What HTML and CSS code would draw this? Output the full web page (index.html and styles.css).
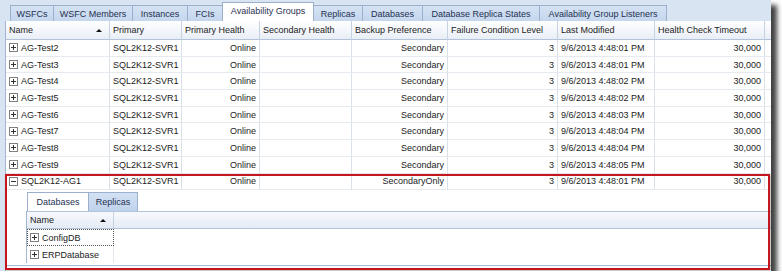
FILE: index.html
```html
<!DOCTYPE html>
<html>
<head>
  <title>Availability Groups</title>
  <link rel="stylesheet" href="styles.css">
</head>
<body>
<div class="window">
  <div class="tabs">
    <span class="tab">WSFCs</span>
    <span class="tab">WSFC Members</span>
    <span class="tab">Instances</span>
    <span class="tab">FCIs</span>
    <span class="tab on">Availability Groups</span>
    <span class="tab">Replicas</span>
    <span class="tab">Databases</span>
    <span class="tab">Database Replica States</span>
    <span class="tab">Availability Group Listeners</span>
  </div>

  <div class="grid">
    <div class="row head">
      <div class="cell">Name <span class="sort"></span></div>
      <div class="cell">Primary</div>
      <div class="cell">Primary Health</div>
      <div class="cell">Secondary Health</div>
      <div class="cell">Backup Preference</div>
      <div class="cell">Failure Condition Level</div>
      <div class="cell">Last Modified</div>
      <div class="cell">Health Check Timeout</div>
      <div class="cell"></div>
    </div>

    <div class="row">
      <div class="cell"><svg class="exp" width="9" height="9" viewBox="0 0 9 9"><rect x="0.5" y="0.5" width="8" height="8" fill="#fff" stroke="#808080"/><path d="M2 4.5h5M4.5 2v5" stroke="#333"/></svg>AG-Test2</div>
      <div class="cell">SQL2K12-SVR1</div>
      <div class="cell num">Online</div>
      <div class="cell"></div>
      <div class="cell num">Secondary</div>
      <div class="cell num">3</div>
      <div class="cell">9/6/2013 4:48:01 PM</div>
      <div class="cell num">30,000</div>
      <div class="cell"></div>
    </div>
    <div class="row">
      <div class="cell"><svg class="exp" width="9" height="9" viewBox="0 0 9 9"><rect x="0.5" y="0.5" width="8" height="8" fill="#fff" stroke="#808080"/><path d="M2 4.5h5M4.5 2v5" stroke="#333"/></svg>AG-Test3</div>
      <div class="cell">SQL2K12-SVR1</div>
      <div class="cell num">Online</div>
      <div class="cell"></div>
      <div class="cell num">Secondary</div>
      <div class="cell num">3</div>
      <div class="cell">9/6/2013 4:48:01 PM</div>
      <div class="cell num">30,000</div>
      <div class="cell"></div>
    </div>
    <div class="row">
      <div class="cell"><svg class="exp" width="9" height="9" viewBox="0 0 9 9"><rect x="0.5" y="0.5" width="8" height="8" fill="#fff" stroke="#808080"/><path d="M2 4.5h5M4.5 2v5" stroke="#333"/></svg>AG-Test4</div>
      <div class="cell">SQL2K12-SVR1</div>
      <div class="cell num">Online</div>
      <div class="cell"></div>
      <div class="cell num">Secondary</div>
      <div class="cell num">3</div>
      <div class="cell">9/6/2013 4:48:02 PM</div>
      <div class="cell num">30,000</div>
      <div class="cell"></div>
    </div>
    <div class="row">
      <div class="cell"><svg class="exp" width="9" height="9" viewBox="0 0 9 9"><rect x="0.5" y="0.5" width="8" height="8" fill="#fff" stroke="#808080"/><path d="M2 4.5h5M4.5 2v5" stroke="#333"/></svg>AG-Test5</div>
      <div class="cell">SQL2K12-SVR1</div>
      <div class="cell num">Online</div>
      <div class="cell"></div>
      <div class="cell num">Secondary</div>
      <div class="cell num">3</div>
      <div class="cell">9/6/2013 4:48:02 PM</div>
      <div class="cell num">30,000</div>
      <div class="cell"></div>
    </div>
    <div class="row">
      <div class="cell"><svg class="exp" width="9" height="9" viewBox="0 0 9 9"><rect x="0.5" y="0.5" width="8" height="8" fill="#fff" stroke="#808080"/><path d="M2 4.5h5M4.5 2v5" stroke="#333"/></svg>AG-Test6</div>
      <div class="cell">SQL2K12-SVR1</div>
      <div class="cell num">Online</div>
      <div class="cell"></div>
      <div class="cell num">Secondary</div>
      <div class="cell num">3</div>
      <div class="cell">9/6/2013 4:48:03 PM</div>
      <div class="cell num">30,000</div>
      <div class="cell"></div>
    </div>
    <div class="row">
      <div class="cell"><svg class="exp" width="9" height="9" viewBox="0 0 9 9"><rect x="0.5" y="0.5" width="8" height="8" fill="#fff" stroke="#808080"/><path d="M2 4.5h5M4.5 2v5" stroke="#333"/></svg>AG-Test7</div>
      <div class="cell">SQL2K12-SVR1</div>
      <div class="cell num">Online</div>
      <div class="cell"></div>
      <div class="cell num">Secondary</div>
      <div class="cell num">3</div>
      <div class="cell">9/6/2013 4:48:04 PM</div>
      <div class="cell num">30,000</div>
      <div class="cell"></div>
    </div>
    <div class="row">
      <div class="cell"><svg class="exp" width="9" height="9" viewBox="0 0 9 9"><rect x="0.5" y="0.5" width="8" height="8" fill="#fff" stroke="#808080"/><path d="M2 4.5h5M4.5 2v5" stroke="#333"/></svg>AG-Test8</div>
      <div class="cell">SQL2K12-SVR1</div>
      <div class="cell num">Online</div>
      <div class="cell"></div>
      <div class="cell num">Secondary</div>
      <div class="cell num">3</div>
      <div class="cell">9/6/2013 4:48:04 PM</div>
      <div class="cell num">30,000</div>
      <div class="cell"></div>
    </div>
    <div class="row">
      <div class="cell"><svg class="exp" width="9" height="9" viewBox="0 0 9 9"><rect x="0.5" y="0.5" width="8" height="8" fill="#fff" stroke="#808080"/><path d="M2 4.5h5M4.5 2v5" stroke="#333"/></svg>AG-Test9</div>
      <div class="cell">SQL2K12-SVR1</div>
      <div class="cell num">Online</div>
      <div class="cell"></div>
      <div class="cell num">Secondary</div>
      <div class="cell num">3</div>
      <div class="cell">9/6/2013 4:48:05 PM</div>
      <div class="cell num">30,000</div>
      <div class="cell"></div>
    </div>

    <div class="expanded">
      <div class="row">
        <div class="cell"><svg class="exp" width="9" height="9" viewBox="0 0 9 9"><rect x="0.5" y="0.5" width="8" height="8" fill="#fff" stroke="#808080"/><path d="M2 4.5h5" stroke="#333"/></svg>SQL2K12-AG1</div>
        <div class="cell">SQL2K12-SVR1</div>
        <div class="cell num">Online</div>
        <div class="cell"></div>
        <div class="cell num">SecondaryOnly</div>
        <div class="cell num">3</div>
        <div class="cell">9/6/2013 4:48:01 PM</div>
        <div class="cell num">30,000</div>
        <div class="cell"></div>
      </div>
      <div class="detail">
        <div class="subtabs">
          <span class="subtab on">Databases</span>
          <span class="subtab">Replicas</span>
        </div>
        <div class="subgrid">
          <div class="subrow subhead">
            <div class="subcell">Name <span class="sort"></span></div>
            <div class="subcell fill"></div>
          </div>
          <div class="subrow">
            <div class="subcell focus"><svg class="exp" width="9" height="9" viewBox="0 0 9 9"><rect x="0.5" y="0.5" width="8" height="8" fill="#fff" stroke="#808080"/><path d="M2 4.5h5M4.5 2v5" stroke="#333"/></svg>ConfigDB</div>
            <div class="subcell fill"></div>
          </div>
          <div class="subrow">
            <div class="subcell"><svg class="exp" width="9" height="9" viewBox="0 0 9 9"><rect x="0.5" y="0.5" width="8" height="8" fill="#fff" stroke="#808080"/><path d="M2 4.5h5M4.5 2v5" stroke="#333"/></svg>ERPDatabase</div>
            <div class="subcell fill"></div>
          </div>
        </div>
      </div>
    </div>
  </div>
</div>
</body>
</html>
```

FILE: styles.css
```css
body {
  margin: 0;
  background: #fff;
  font-family: "Liberation Sans", Arial, sans-serif;
  font-size: 9px;
  color: #1b1b1b;
}

.window {
  width: 771px;
  height: 271px;
  background: #d9e4f3;
  box-shadow: 6px 5px 5px rgba(0, 0, 0, 0.75);
  overflow: hidden;
}

/* top tab strip */
.tabs {
  display: flex;
  align-items: flex-end;
  height: 21px;
  padding-left: 10px;
}
.tab {
  height: 16px;
  line-height: 16px;
  text-align: center;
  margin-right: -1px;
  background: linear-gradient(#d5e2f3, #c4d6ee);
  border: 1px solid #9bb0cd;
  border-bottom: none;
  color: #1f3150;
  box-sizing: border-box;
  white-space: nowrap;
}
.tab:nth-child(1) { width: 44px; }
.tab:nth-child(2) { width: 80px; }
.tab:nth-child(3) { width: 56px; }
.tab:nth-child(4) { width: 36px; }
.tab:nth-child(5) { width: 92px; }
.tab:nth-child(6) { width: 50px; }
.tab:nth-child(7) { width: 61px; }
.tab:nth-child(8) { width: 118px; }
.tab:nth-child(9) { width: 128px; }
.tab.on {
  height: 19px;
  line-height: 17px;
  background: #fff;
  position: relative;
  z-index: 1;
}

/* main grid */
.grid {
  margin-left: 5px;
  background: #fff;
  border-left: 1px solid #a3b5cf;
  height: 250px;
}
.row {
  display: grid;
  grid-template-columns: 104px 72px 78px 92px 96px 110px 97px 110px 6px;
  height: 16.7px;
}
.cell {
  display: flex;
  align-items: center;
  padding: 0 3px;
  border-right: 1px solid #dbe1e9;
  border-bottom: 1px solid #e6eaf0;
  white-space: nowrap;
  overflow: hidden;
  box-sizing: border-box;
}
.cell.num { justify-content: flex-end; }

.head { height: 19px; }
.head .cell {
  padding-left: 3px;
  background: linear-gradient(#fff, #e9eef6);
  border-right-color: #c6d2e3;
  border-bottom-color: #b3c3da;
  color: #222;
}
.sort {
  margin-left: auto;
  margin-right: 4px;
  width: 0;
  height: 0;
  border-left: 3px solid transparent;
  border-right: 3px solid transparent;
  border-bottom: 3px solid #111;
}

.exp { flex: none; margin-right: 3px; }

/* expanded group with detail */
.expanded { position: relative; }
.expanded::after {
  content: "";
  position: absolute;
  left: -1px;
  right: 1px;
  top: 0;
  bottom: 0;
  border: 2px solid #c4161c;
  box-shadow: 1px 1px 2px rgba(0, 0, 0, 0.3);
  pointer-events: none;
}
.detail {
  height: 80px;
  padding-left: 20px;
  border-bottom: 4px solid #fff;
  box-sizing: border-box;
  position: relative;
}
.detail::after {
  content: "";
  position: absolute;
  left: 0;
  right: 0;
  bottom: 0;
  border-bottom: 1px solid #a8b8cc;
}
.subtabs {
  display: flex;
  align-items: flex-end;
  height: 21px;
  padding-left: 1px;
}
.subtab {
  height: 19px;
  line-height: 19px;
  width: 50px;
  text-align: center;
  margin-right: -1px;
  background: linear-gradient(#d3e1f3, #bfd2ec);
  border: 1px solid #9bb0cd;
  border-bottom: none;
  color: #1f3150;
  box-sizing: border-box;
}
.subtab.on { background: #fff; width: 62px; }

.subgrid { border-left: 1px solid #a3b5cf; }
.subrow {
  display: grid;
  grid-template-columns: 87px 1fr;
  height: 17px;
}
.subcell {
  display: flex;
  align-items: center;
  padding: 0 3px;
  border-right: 1px solid #e3e8ee;
  white-space: nowrap;
  box-sizing: border-box;
}
.subcell.fill { border-right: none; }
.subhead { height: 18px; }
.subhead .subcell {
  background: linear-gradient(#f7f9fc, #e4ebf5);
  border-top: 1px solid #b3c3da;
  border-bottom: 1px solid #b3c3da;
  border-right-color: #c6d2e3;
  color: #222;
}
.subcell.focus { border: 1px dotted #555; padding-left: 2px; }
```
